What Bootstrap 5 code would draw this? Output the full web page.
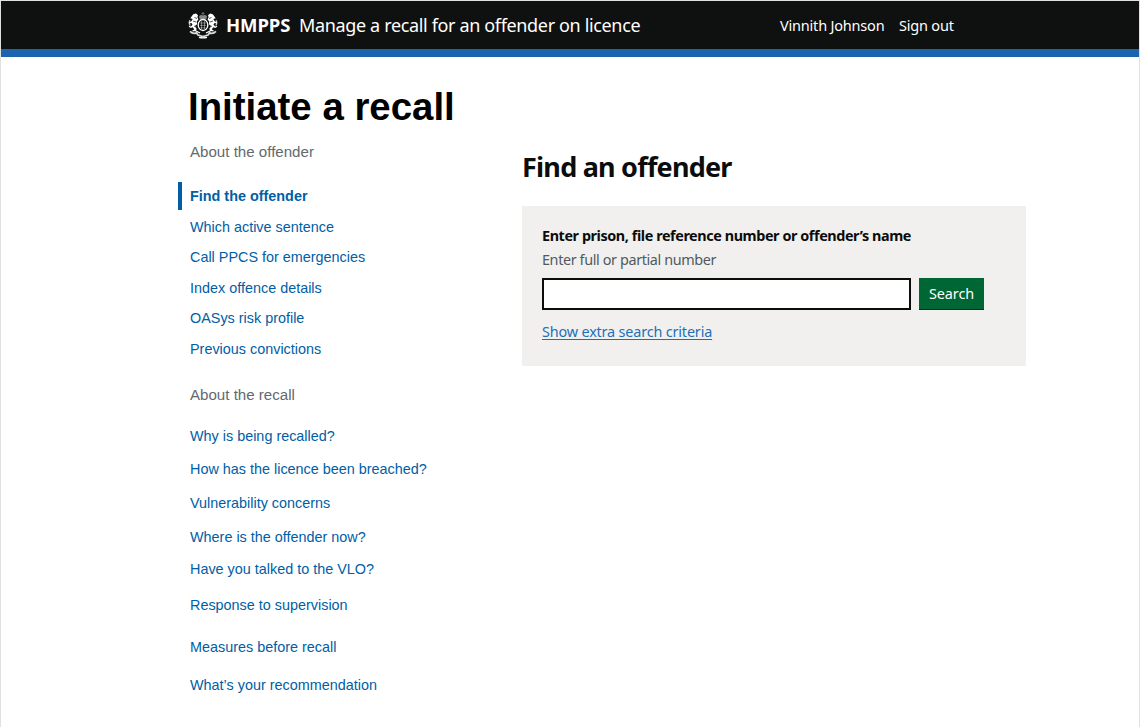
<!DOCTYPE html>
<html lang="en">
<head>
<meta charset="utf-8">
<meta name="viewport" content="width=device-width, initial-scale=1">
<title>Initiate a recall</title>
<link href="https://cdn.jsdelivr.net/npm/bootstrap@5.3.0/dist/css/bootstrap.min.css" rel="stylesheet">
<style>
:root{--gds:"Noto Sans","Open Sans",sans-serif;--hel:"Liberation Sans",Arial,sans-serif}
body{font-family:var(--hel);color:#0b0c0c;background:#fff;min-height:727px;border:1px solid #dfe1e1;border-bottom:0;overflow:hidden}
.top-bar{height:56px;background:#0f1110;border-bottom:8px solid #1b65b0;padding-left:187px;font-family:var(--gds);color:#fff}
.top-bar a{color:#fff;text-decoration:none;white-space:nowrap}
.crest{width:30px;height:28px;flex:none}
.org{font-size:18.5px;font-weight:700;margin-left:8px;width:73px;letter-spacing:-.1px}
.service{font-size:18px;width:481px;letter-spacing:-.35px}
.account{font-size:14.5px;letter-spacing:-.2px;padding-top:2px}
.user-link{width:119px}
.page{padding-left:177px}
h1{font-size:38.4px;font-weight:700;line-height:44px;margin:28px 0 0 10px;color:#000}
.side{width:344px;font-size:14.4px;padding-top:13px}
.side h2{font-size:15.1px;line-height:20px;color:#626a6e;margin:0 0 0 12px}
.side .second-heading{margin-top:22px}
.steps{display:grid;list-style:none;padding:0;margin:0}
.steps a{color:#005ea5;text-decoration:none;padding:2px 0 0 8px;border-left:4px solid transparent;display:flex;align-items:center;height:28px}
.steps .current{font-weight:700;border-color:#005ea5}
.steps-offender{grid-template-rows:31px 30px 31px 30px 31px 28px;margin-top:20px}
.steps-recall{grid-template-rows:33px 34px 34px 32px 36px 42px 38px 28px;margin-top:17px}
.find{width:503.500px;font-family:var(--gds)}
.find h2{font-size:27px;font-weight:700;line-height:32px;letter-spacing:-.77px;margin:22px 0 23px}
.search-panel{height:160px;background:#f1f0ee;padding:20px}
.search-panel label{font-size:14.4px;font-weight:700;line-height:20px;display:block;white-space:nowrap;letter-spacing:-.42px}
.hint{font-size:14.4px;line-height:20px;color:#505a5f;margin-top:4px;letter-spacing:-.38px}
.search-row{margin:8px 0 9px}
.term{width:369px;height:32px;border:2px solid #0b0c0c;border-radius:0;padding:4px}
.go{width:65px;height:32px;border:0;border-bottom:1px solid #00341d;border-radius:0;background:#006633;color:#fff;font-size:14.4px;padding:0;letter-spacing:-.05px}
.extra{color:#1d70b8;font-size:14.4px;line-height:20px;text-underline-offset:2px;letter-spacing:-.16px}
</style>
</head>
<body>
<header class="top-bar d-flex align-items-center">
  <svg class="crest" viewBox="0 0 30 28" fill="#fff" aria-hidden="true">
    <path d="M14.5 1h1v1.2h1.2v.9h-1.2v1h-1v-1h-1.2v-.9h1.2z" opacity=".4"/>
    <path d="M11 5.2q2-1.8 4-.7 2-1.1 4 .7l-.8 3.2h-6.4z" opacity=".5"/>
    <path d="M5.2 3.200 8 2.600l2 1.600-.6 1.800 1 2.400-1.700 2.200.4 2.700-2 1.500 1.600 3.100-1 2.200-3.200.3-.2-1 2-.8-1.600-2.400-1.800.9-2.200-1.400.6-1 1.500.7 1.700-1.700-1-1.800-2.100.5-.5-1.200 2.400-1 1.400-2.200-2.400-.7z"/>
    <path d="M24.800 3.200 22 2.600l-2 1.600.6 1.800-1 2.400 1.700 2.200-.4 2.700 2 1.500-1.600 3.100 1 2.200 3.200.3.200-1-2-.8 1.600-2.400 1.800.9 2.200-1.400-.6-1-1.500.7-1.700-1.700 1-1.800 2.100.5.500-1.200-2.400-1-1.400-2.200 2.400-.7z"/>
    <g fill="none" stroke="#fff">
      <path d="M2.300 14.500Q.2 12 2 9M27.700 14.500Q29.800 12 28 9" stroke-width="1.200" opacity=".75"/>
      <ellipse cx="15" cy="14" rx="4.800" ry="5.500" stroke-width="1.300"/>
      <path d="M12 12h6m-6 2.400h6m-5.500 2.400h5M13.500 10v8m3-8v8" stroke-width=".9" opacity=".45"/>
      <path d="M2 20.300q3 3 6.500 1.600L10 24l5 1.500 5-1.500 1.500-2.100Q25 23.300 28 20.300" stroke-width="1.700" opacity=".85"/>
      <path d="M11 26.300q4 1 8 0M7 19.500l5 2.500m11-2.500-5 2.500" stroke-width="1.300"/>
    </g>
    <path d="M6.500 6.500 9 7.500M5 10l3 1M23.500 6.500 21 7.500M25 10l-3 1M6 15l2 1m16-1-2 1" stroke="#0f1110" stroke-width=".7"/>
  </svg>
  <a class="org" href="#"><span>HMPPS</span></a>
  <a class="service" href="#"><span>Manage a recall for an offender on licence</span></a>
  <nav class="account d-flex"><a class="user-link" href="#"><span>Vinnith Johnson</span></a><a href="#">Sign out</a></nav>
</header>
<main class="page">
  <h1>Initiate a recall</h1>
  <div class="d-flex align-items-start">
    <nav class="side flex-shrink-0">
      <h2 class="fw-normal">About the offender</h2>
      <ul class="steps steps-offender">
        <li><a class="current" href="#">Find the offender</a></li>
        <li><a href="#">Which active sentence</a></li>
        <li><a href="#">Call PPCS for emergencies</a></li>
        <li><a href="#">Index offence details</a></li>
        <li><a href="#">OASys risk profile</a></li>
        <li><a href="#">Previous convictions</a></li>
      </ul>
      <h2 class="fw-normal second-heading">About the recall</h2>
      <ul class="steps steps-recall">
        <li><a href="#">Why is being recalled?</a></li>
        <li><a href="#">How has the licence been breached?</a></li>
        <li><a href="#">Vulnerability concerns</a></li>
        <li><a href="#">Where is the offender now?</a></li>
        <li><a href="#">Have you talked to the VLO?</a></li>
        <li><a href="#">Response to supervision</a></li>
        <li><a href="#">Measures before recall</a></li>
        <li><a href="#">What’s your recommendation</a></li>
      </ul>
    </nav>
    <section class="find flex-shrink-0">
      <h2>Find an offender</h2>
      <form class="search-panel">
        <label for="term"><span>Enter prison, file reference number or offender’s name</span></label>
        <div class="hint"><span>Enter full or partial number</span></div>
        <div class="search-row d-flex gap-2">
          <input class="form-control term" id="term" type="text">
          <button class="btn go" type="button">Search</button>
        </div>
        <a class="extra" href="#">Show extra search criteria</a>
      </form>
    </section>
  </div>
</main>
<script src="https://cdn.jsdelivr.net/npm/bootstrap@5.3.0/dist/js/bootstrap.bundle.min.js"></script>
</body>
</html>
